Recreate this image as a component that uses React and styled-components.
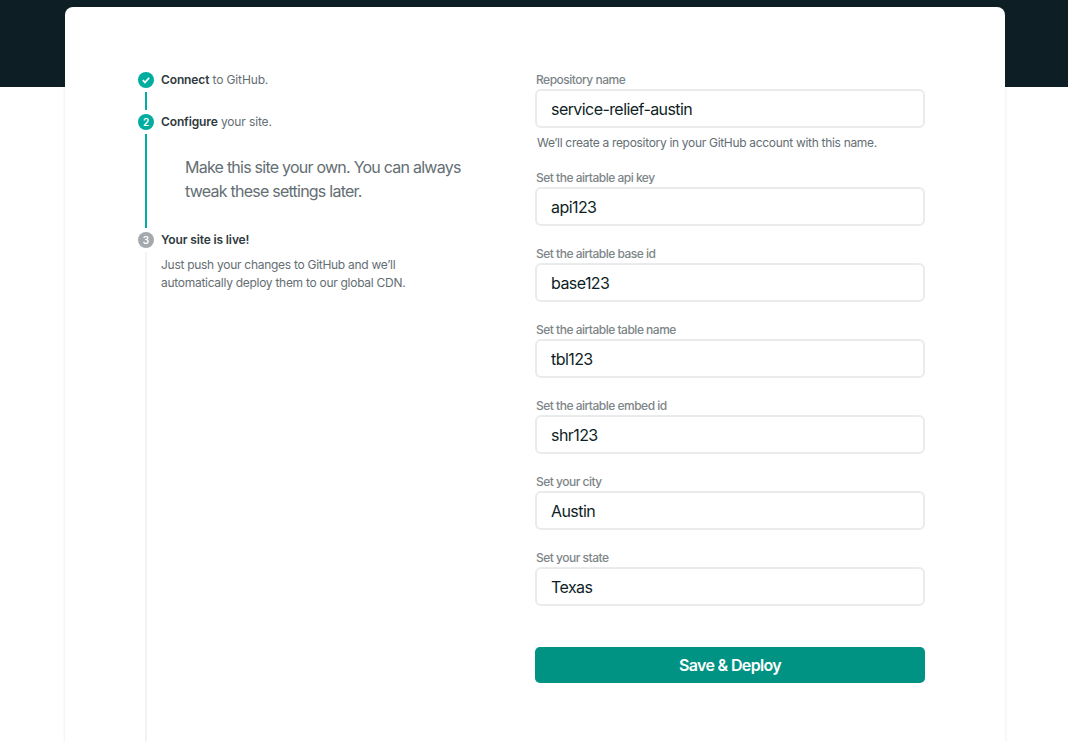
import styled, { createGlobalStyle } from "styled-components";

const GlobalStyle = createGlobalStyle`
  html, body {
    margin: 0;
    height: 100%;
    overflow: hidden;
    background: #fff;
    font-family: Inter, "Liberation Sans", sans-serif;
  }
`;

const Page = styled.div`
  height: 100vh;
  overflow: hidden;
`;

const Header = styled.div`
  height: 87px;
  background: #0e1e25;
`;

const Card = styled.main`
  width: 940px;
  margin: -80px 0 0 65px;
  padding: 65px 80px 0 73px;
  box-sizing: border-box;
  min-height: 760px;
  display: grid;
  grid-template-columns: 397px 390px;
  background: #fff;
  border-radius: 8px 8px 0 0;
  box-shadow: 0 0 3px rgba(14, 30, 37, 0.12);
`;

const Steps = styled.div`
  display: flex;
  flex-direction: column;
`;

const Step = styled.section`
  display: grid;
  grid-template-columns: 16px 1fr;
  column-gap: 7px;
  flex: ${(p) => (p.$last ? 1 : "none")};
`;

const Marker = styled.div`
  display: flex;
  flex-direction: column;
  align-items: center;
`;

const Circle = styled.div`
  width: 16px;
  height: 16px;
  flex: none;
  border-radius: 50%;
  background: ${(p) => (p.$done ? "#00ad9f" : "#a3a9ac")};
  color: #fff;
  font-size: 10px;
  font-weight: 600;
  display: flex;
  align-items: center;
  justify-content: center;
`;

const Rail = styled.div`
  width: 2px;
  flex: 1;
  margin: 4px 0;
  min-height: ${(p) => p.$height || 0}px;
  background: ${(p) => (p.$done ? "#00ad9f" : "#f2f3f3")};
`;

const StepBody = styled.div`
  min-width: 0;
`;

const StepTitle = styled.h2`
  margin: 0;
  font-size: 12px;
  line-height: 16px;
  font-weight: 400;
  letter-spacing: -0.13px;
  color: #646e73;

  strong {
    font-weight: 600;
    color: #2f3a40;
  }
`;

const StepLead = styled.p`
  margin: 25px 0 0 24px;
  width: 290px;
  font-size: 16px;
  line-height: 24px;
  letter-spacing: -0.76px;
  color: #646e73;
`;

const StepText = styled.p`
  margin: 8px 0 0;
  font-size: 12px;
  line-height: 18px;
  letter-spacing: -0.28px;
  color: #646e73;
`;

const Form = styled.form`
  display: flex;
  flex-direction: column;
`;

const Field = styled.label`
  display: block;
  margin-bottom: ${(p) => (p.$hint ? 19 : 20)}px;
`;

const Label = styled.span`
  display: block;
  height: 17px;
  padding-left: 1px;
  font-size: 12px;
  line-height: 16px;
  font-weight: 500;
  letter-spacing: -0.5px;
  color: #7d8589;
`;

const Input = styled.input`
  display: block;
  width: 100%;
  height: 39px;
  box-sizing: border-box;
  padding: 0 14px;
  border: 2px solid #eaebec;
  border-radius: 6px;
  outline: none;
  background: #fff;
  font-family: inherit;
  font-size: 16px;
  font-weight: 400;
  letter-spacing: -0.57px;
  color: #0e1e25;
`;

const Hint = styled.small`
  display: block;
  margin: 7px 0 0 2px;
  font-size: 12px;
  line-height: 16px;
  letter-spacing: -0.31px;
  color: #646e73;
`;

const SaveButton = styled.button`
  height: 36px;
  margin-top: 21px;
  border: 0;
  border-radius: 5px;
  background: #009384;
  color: #fff;
  font-family: inherit;
  font-size: 16px;
  font-weight: 600;
  letter-spacing: -0.65px;
`;

const fields = [
  { label: "Repository name", value: "service-relief-austin", hint: "We’ll create a repository in your GitHub account with this name." },
  { label: "Set the airtable api key", value: "api123" },
  { label: "Set the airtable base id", value: "base123" },
  { label: "Set the airtable table name", value: "tbl123" },
  { label: "Set the airtable embed id", value: "shr123" },
  { label: "Set your city", value: "Austin" },
  { label: "Set your state", value: "Texas" },
];

const Check = () => (
  <svg width="10" height="10" viewBox="0 0 10 10" fill="none">
    <path d="M1.8 5.2 4 7.4 8.2 2.8" stroke="#fff" strokeWidth="1.7" />
  </svg>
);

const App = () => {
  return (
    <Page>
      <GlobalStyle />
      <Header />
      <Card>
        <Steps>
          <Step>
            <Marker>
              <Circle $done>
                <Check />
              </Circle>
              <Rail $done $height={18} />
            </Marker>
            <StepBody>
              <StepTitle>
                <strong>Connect</strong> to GitHub.
              </StepTitle>
            </StepBody>
          </Step>
          <Step>
            <Marker>
              <Circle $done>2</Circle>
              <Rail $done $height={94} />
            </Marker>
            <StepBody>
              <StepTitle>
                <strong>Configure</strong> your site.
              </StepTitle>
              <StepLead>Make this site your own. You can always tweak these settings later.</StepLead>
            </StepBody>
          </Step>
          <Step $last>
            <Marker>
              <Circle>3</Circle>
              <Rail />
            </Marker>
            <StepBody>
              <StepTitle>
                <strong>Your site is live!</strong>
              </StepTitle>
              <StepText>
                Just push your changes to GitHub and we’ll
                <br />
                automatically deploy them to our global CDN.
              </StepText>
            </StepBody>
          </Step>
        </Steps>
        <Form>
          {fields.map((f) => (
            <Field key={f.label} $hint={!!f.hint}>
              <Label>{f.label}</Label>
              <Input defaultValue={f.value} />
              {f.hint && <Hint>{f.hint}</Hint>}
            </Field>
          ))}
          <SaveButton type="button">Save &amp; Deploy</SaveButton>
        </Form>
      </Card>
    </Page>
  );
};

export default App;
